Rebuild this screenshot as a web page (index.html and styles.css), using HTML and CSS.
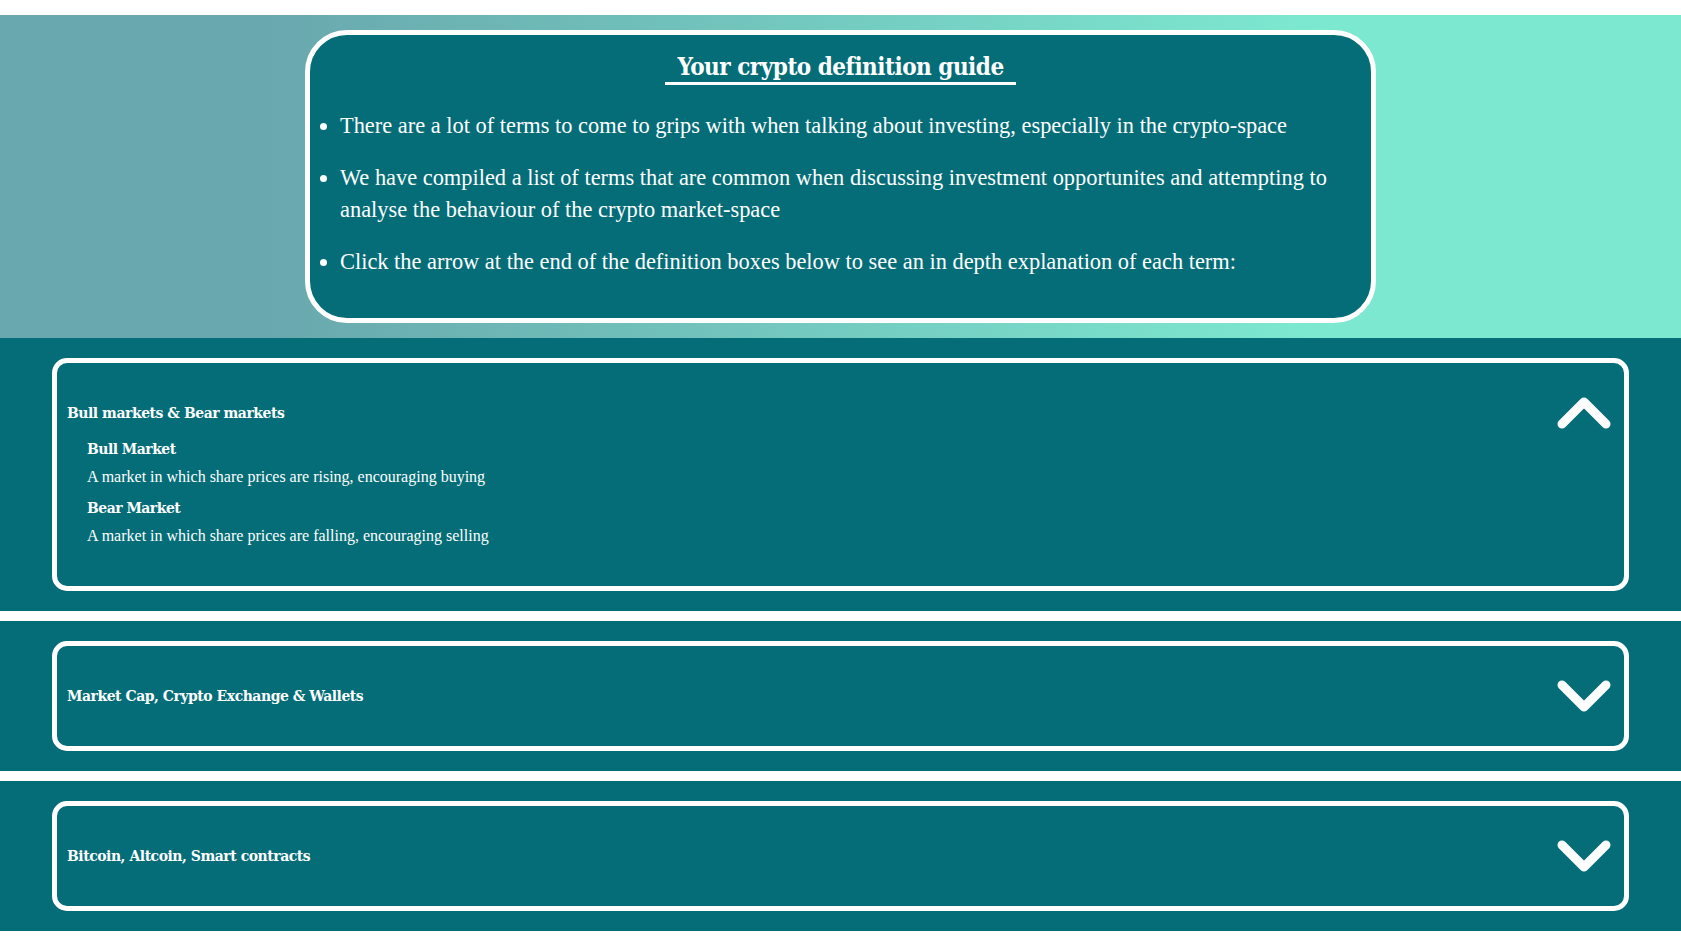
FILE: index.html
```html
<!DOCTYPE html>
<html lang="en">
<head>
<meta charset="utf-8">
<title>Your crypto definition guide</title>
<link rel="stylesheet" href="styles.css">
</head>
<body>
<header class="hero">
  <div class="guide">
    <h1 class="guide-title"><span>Your crypto definition guide</span></h1>
    <ul class="guide-list">
      <li>There are a lot of terms to come to grips with when talking about investing, especially in the crypto-space</li>
      <li>We have compiled a list of terms that are common when discussing investment opportunites and attempting to analyse the behaviour of the crypto market-space</li>
      <li>Click the arrow at the end of the definition boxes below to see an in depth explanation of each term:</li>
    </ul>
  </div>
</header>

<section class="band">
  <div class="box">
    <div class="box-head">
      <h3 class="box-title">Bull markets &amp; Bear markets</h3>
      <svg class="chev" viewBox="0 0 54 32" width="54" height="32" aria-hidden="true"><polyline points="5,27 27,5 49,27"/></svg>
    </div>
    <div class="terms">
      <h4 class="term-name">Bull Market</h4>
      <p class="term-desc">A market in which share prices are rising, encouraging buying</p>
      <h4 class="term-name">Bear Market</h4>
      <p class="term-desc">A market in which share prices are falling, encouraging selling</p>
    </div>
  </div>
</section>

<section class="band">
  <div class="box">
    <div class="box-head">
      <h3 class="box-title">Market Cap, Crypto Exchange &amp; Wallets</h3>
      <svg class="chev" viewBox="0 0 54 32" width="54" height="32" aria-hidden="true"><polyline points="5,5 27,27 49,5"/></svg>
    </div>
  </div>
</section>

<section class="band">
  <div class="box">
    <div class="box-head">
      <h3 class="box-title">Bitcoin, Altcoin, Smart contracts</h3>
      <svg class="chev" viewBox="0 0 54 32" width="54" height="32" aria-hidden="true"><polyline points="5,5 27,27 49,5"/></svg>
    </div>
  </div>
</section>
</body>
</html>
```

FILE: styles.css
```css
html, body {
  margin: 0;
  padding: 0;
  background: #ffffff;
}

body {
  padding: 15px 0 10px;
  display: flex;
  flex-direction: column;
  gap: 10px;
  font-family: "Liberation Serif", "Times New Roman", serif;
  color: #ffffff;
}

.hero {
  margin-bottom: -10px;
  padding: 15px 0;
  background: linear-gradient(90deg, #69a8ae 16%, #7de8d0 78%);
  display: flex;
  justify-content: center;
}

.guide {
  box-sizing: border-box;
  width: 1071px;
  height: 293px;
  border: 5px solid #ffffff;
  border-radius: 42px;
  background: #046d78;
  padding: 17px 0 0;
}

.guide-title {
  margin: 0;
  text-align: center;
  font-family: "DejaVu Serif Condensed", "DejaVu Serif", serif;
  font-stretch: condensed;
  font-weight: bold;
  font-size: 24px;
  line-height: 30px;
  letter-spacing: -0.5px;
}

.guide-title span {
  display: inline-block;
  padding: 0 12px;
  border-bottom: 3px solid #ffffff;
}

.guide-list {
  margin: 24.5px 0 0;
  padding: 0 30px 0 30px;
  font-size: 22.4px;
  line-height: 32.5px;
}

.guide-list li {
  margin-bottom: 19.5px;
}

.band {
  background: #046d78;
  padding: 20px 52px;
}

.box {
  border: 5px solid #ffffff;
  border-radius: 15px;
  padding: 23px 13px 24px 10px;
}

.box-head {
  display: flex;
  align-items: center;
  justify-content: space-between;
}

.box-title {
  margin: 16px 0;
  font-family: "DejaVu Serif Condensed", "DejaVu Serif", serif;
  font-stretch: condensed;
  font-weight: bold;
  font-size: 15.5px;
  line-height: 21px;
  letter-spacing: -0.45px;
}

.chev {
  display: block;
  flex: none;
}

.chev polyline {
  fill: none;
  stroke: #ffffff;
  stroke-width: 9;
  stroke-linecap: round;
  stroke-linejoin: round;
}

.terms {
  padding-left: 20px;
  margin-bottom: 16px;
}

.term-name {
  margin: 0 0 8px;
  font-family: "DejaVu Serif Condensed", "DejaVu Serif", serif;
  font-stretch: condensed;
  font-weight: bold;
  font-size: 15.5px;
  line-height: 20px;
  letter-spacing: -0.5px;
}

.term-desc {
  margin: 0 0 11px;
  font-size: 16px;
  line-height: 20px;
}

.term-desc:last-child {
  margin-bottom: 0;
}
```
